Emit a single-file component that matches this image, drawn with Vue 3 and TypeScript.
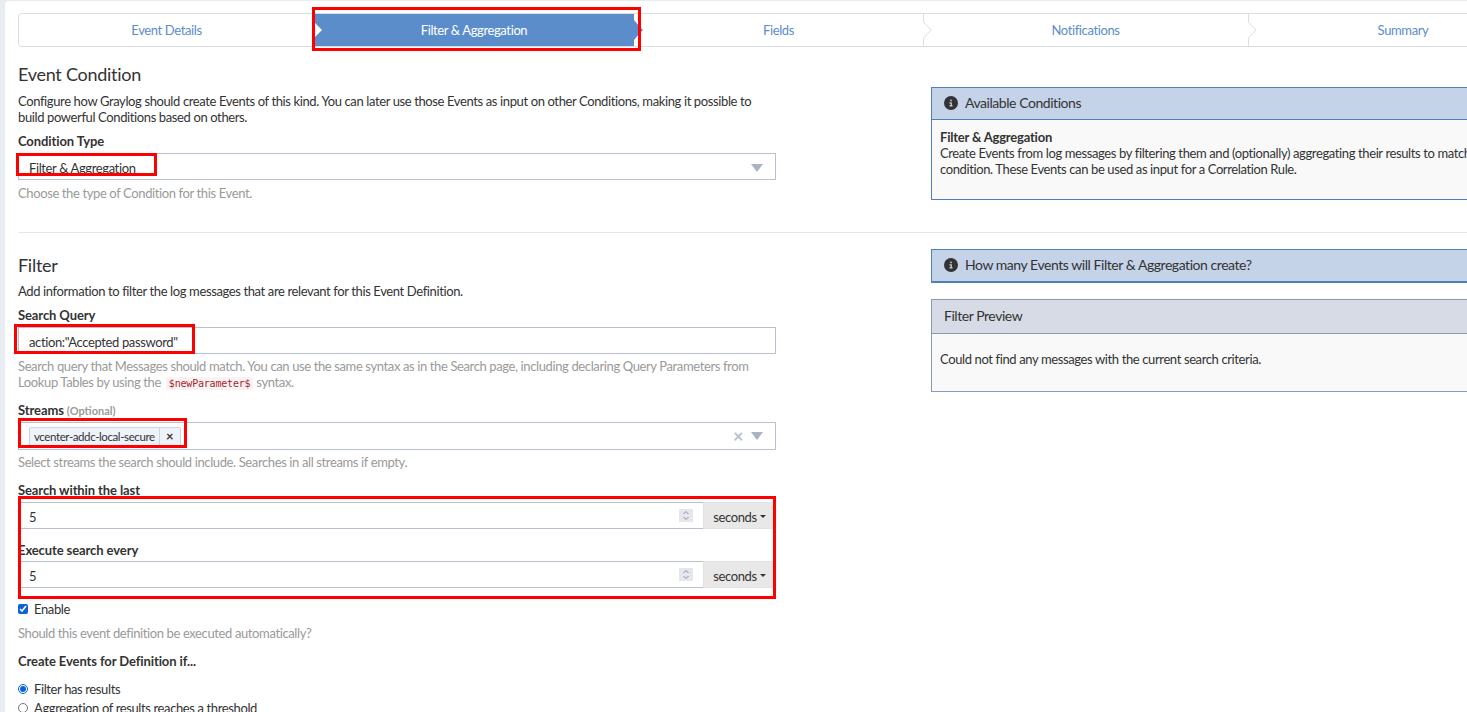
<script setup lang="ts">
interface WizardStep {
  title: string
  active?: boolean
}

const steps: WizardStep[] = [
  { title: 'Event Details' },
  { title: 'Filter & Aggregation', active: true },
  { title: 'Fields' },
  { title: 'Notifications' },
  { title: 'Summary' },
]

const infoPath =
  'M256 512A256 256 0 1 0 256 0a256 256 0 1 0 0 512zM216 336h24V272H216c-13.3 0-24-10.7-24-24s10.7-24 24-24h48c13.3 0 24 10.7 24 24v88h8c13.3 0 24 10.7 24 24s-10.7 24-24 24H216c-13.3 0-24-10.7-24-24s10.7-24 24-24zm40-208a32 32 0 1 1 0 64 32 32 0 1 1 0-64z'
</script>

<template>
  <div class="page">
    <div class="card">
      <nav class="steps">
        <div v-for="step in steps" :key="step.title" class="step" :class="{ active: step.active }">
          <svg class="chevron" viewBox="0 0 9 34" aria-hidden="true">
            <path v-if="step.active" d="M0 8 L8 16 L0 24 Z" fill="#fff" />
            <path v-else d="M0.5 0 V9 L8 17 L0.5 25 V34" fill="#fff" stroke="#d9dde6" />
          </svg>
          <svg v-if="step.active" class="tip" viewBox="0 0 9 32" aria-hidden="true">
            <path d="M0 6 L5 12 L9 16 L5 20 L0 26 Z" fill="#5b8dcb" />
          </svg>
          {{ step.title }}
        </div>
      </nav>

      <section class="row first">
        <div class="left">
          <h2>Event Condition</h2>
          <p class="text">
            Configure how Graylog should create Events of this kind. You can later use those Events as input on other Conditions, making it possible to build powerful Conditions based on others.
          </p>
          <label class="label">Condition Type</label>
          <div class="select">
            <span>Filter &amp; Aggregation</span>
            <span class="caret-big"></span>
          </div>
          <p class="help">Choose the type of Condition for this Event.</p>
        </div>
        <aside class="right">
          <div class="panel info">
            <header>
              <svg viewBox="0 0 512 512" aria-hidden="true"><path :d="infoPath" fill="#333" /></svg>
              Available Conditions
            </header>
            <div class="panel-body tall">
              <strong>Filter &amp; Aggregation</strong><br />
              Create Events from log messages by filtering them and (optionally) aggregating their results to match a given condition. These Events can be used as input for a Correlation Rule.
            </div>
          </div>
        </aside>
      </section>

      <hr />

      <section class="row second-row">
        <div class="left">
          <h2 class="filter-title">Filter</h2>
          <p class="text">Add information to filter the log messages that are relevant for this Event Definition.</p>

          <label class="label query-label">Search Query</label>
          <div class="input">action:"Accepted password"</div>
          <p class="help query-help">
            Search query that Messages should match. You can use the same syntax as in the Search page, including declaring Query Parameters from Lookup Tables by using the
            <code>$newParameter$</code> syntax.
          </p>

          <label class="label streams-label">Streams <small>(Optional)</small></label>
          <div class="select streams">
            <span class="tag">
              <span class="tag-name">vcenter-addc-local-secure</span>
              <span class="tag-close">×</span>
            </span>
            <span class="clear">×</span>
            <span class="caret-big"></span>
          </div>
          <p class="help streams-help">Select streams the search should include. Searches in all streams if empty.</p>

          <label class="label within-label">Search within the last</label>
          <div class="number-group">
            <div class="number">
              5
              <svg class="spin" viewBox="0 0 14 13" aria-hidden="true">
                <rect width="14" height="13" fill="#e6e7ee" />
                <path d="M4.5 5 L7 2.5 L9.5 5 M4.5 8 L7 10.5 L9.5 8" fill="none" stroke="#8a8d96" />
              </svg>
            </div>
            <div class="addon">seconds<span class="caret"></span></div>
          </div>

          <label class="label second">Execute search every</label>
          <div class="number-group">
            <div class="number">
              5
              <svg class="spin" viewBox="0 0 14 13" aria-hidden="true">
                <rect width="14" height="13" fill="#e6e7ee" />
                <path d="M4.5 5 L7 2.5 L9.5 5 M4.5 8 L7 10.5 L9.5 8" fill="none" stroke="#8a8d96" />
              </svg>
            </div>
            <div class="addon">seconds<span class="caret"></span></div>
          </div>

          <label class="check enable"><input type="checkbox" checked /> Enable</label>
          <p class="help enable-help">Should this event definition be executed automatically?</p>

          <label class="label create">Create Events for Definition if...</label>
          <label class="check radio-one"><input type="radio" name="when" checked /> Filter has results</label>
          <label class="check radio-two"><input type="radio" name="when" /> Aggregation of results reaches a threshold</label>
        </div>
        <aside class="right">
          <div class="panel info collapsed">
            <header>
              <svg viewBox="0 0 512 512" aria-hidden="true"><path :d="infoPath" fill="#333" /></svg>
              How many Events will Filter &amp; Aggregation create?
            </header>
          </div>
          <div class="panel preview">
            <header>Filter Preview</header>
            <div class="panel-body">Could not find any messages with the current search criteria.</div>
          </div>
        </aside>
      </section>

      <div class="mark m1"></div>
      <div class="mark m2"></div>
      <div class="mark m3"></div>
      <div class="mark m4"></div>
      <div class="mark m5"></div>
    </div>
  </div>
</template>

<style>
html,
body {
  margin: 0;
  height: 100%;
  overflow: hidden;
  background: #e9ebf2;
}
</style>

<style scoped>
.page {
  height: 712px;
  width: 1467px;
  overflow: hidden;
  padding: 1px 0 0 5px;
  box-sizing: border-box;
  font-family: Lato, "Liberation Sans", sans-serif;
  font-size: 13px;
  line-height: 16px;
  letter-spacing: -0.38px;
  color: #333;
}

.card {
  position: relative;
  width: 1700px;
  height: 800px;
  box-sizing: border-box;
  padding: 12px 0 0 13px;
  background: #fff;
  border-radius: 4px 0 0 0;
}

.steps {
  display: grid;
  grid-template-columns: 295px 320px 289px 325px 310px;
  height: 34px;
  box-sizing: border-box;
  border: 1px solid #d9dde6;
  border-radius: 4px;
  width: 1540px;
}

.step {
  position: relative;
  display: flex;
  align-items: center;
  justify-content: center;
  color: #5b8dcb;
  margin: -1px 0;
}

.step.active {
  margin: 0;
  background: #5b8dcb;
  color: #fff;
}

.chevron {
  position: absolute;
  left: 0;
  top: 0;
  width: 9px;
  height: 34px;
}

.step:first-child .chevron {
  display: none;
}

.step.active + .step .chevron {
  display: none;
}

.tip {
  position: absolute;
  left: 100%;
  top: 0;
  width: 9px;
  height: 32px;
  z-index: 1;
}

.row {
  display: flex;
  gap: 155px;
}

.first {
  margin-top: 17px;
}

.second-row {
  margin-top: 16px;
}

.left {
  width: 758px;
  flex: none;
}

.right {
  width: 600px;
  flex: none;
}

.first .right {
  padding-top: 23px;
}

h2 {
  margin: 0 0 9px;
  font-size: 18px;
  font-weight: 400;
  line-height: 20px;
  letter-spacing: -0.27px;
}

.filter-title {
  margin: 6px 0 8px;
}

.text {
  margin: 0;
}

.label {
  display: block;
  font-weight: 700;
  margin-top: 8px;
  margin-bottom: 4px;
  letter-spacing: -0.1px;
}

.label small {
  font-size: 11px;
  line-height: 0;
  letter-spacing: 0;
  color: #9a9a9a;
}

.select,
.input {
  display: flex;
  align-items: center;
  box-sizing: border-box;
  height: 27px;
  padding: 2px 10px 0;
  border: 1px solid #b7c0cf;
  background: #fff;
}

.select {
  justify-content: space-between;
}

.caret-big {
  width: 0;
  height: 0;
  margin-right: 2px;
  border-left: 6.5px solid transparent;
  border-right: 6.5px solid transparent;
  border-top: 8px solid #a9b3c4;
}

.help {
  margin: 5px 0 0;
  color: #9a9a9a;
}

code {
  margin-left: 2px;
  padding: 1px 3px;
  font-family: "DejaVu Sans Mono", monospace;
  font-size: 10px;
  letter-spacing: -0.2px;
  color: #a3272f;
  background: #fbf2f3;
  border-radius: 2px;
}

hr {
  margin: 31px 0 0;
  border: 0;
  border-top: 1px solid #e5e7ec;
}

.query-label {
  margin-top: 8px;
}

.query-help {
  margin-top: 4px;
}

.streams-label {
  margin-top: 10px;
}

.streams {
  height: 28px;
  padding-top: 0;
  justify-content: flex-start;
}

.tag {
  display: flex;
  height: 19px;
  box-sizing: border-box;
  border: 1px solid #c9d5e8;
  border-radius: 2px;
  background: #eef2f9;
  font-size: 11.5px;
  line-height: 17px;
}

.tag-name {
  padding: 0 4px;
  letter-spacing: -0.4px;
}

.tag-close {
  width: 20px;
  text-align: center;
  border-left: 1px solid #c9d5e8;
  font-size: 13px;
  font-weight: 700;
}

.clear {
  margin-left: auto;
  margin-right: 8px;
  font-size: 18px;
  font-weight: 700;
  color: #b7c0cf;
}

.streams-help {
  margin-top: 4px;
}

.within-label {
  margin-top: 12px;
}

.number-group {
  display: flex;
  height: 27px;
}

.number {
  display: flex;
  align-items: center;
  justify-content: space-between;
  flex: 1;
  box-sizing: border-box;
  padding: 2px 10px 0;
  border: 1px solid #b7c0cf;
  border-right: 0;
}

.spin {
  width: 14px;
  height: 13px;
  margin-top: -2px;
}

.addon {
  display: flex;
  align-items: center;
  justify-content: center;
  gap: 3px;
  width: 73px;
  padding-top: 2px;
  background: #e8e8e8;
  border: 1px solid #e2e2e2;
  box-sizing: border-box;
}

.caret {
  width: 0;
  height: 0;
  border-left: 3px solid transparent;
  border-right: 3px solid transparent;
  border-top: 3px solid #333;
}

.second {
  margin-top: 13px;
  margin-bottom: 3px;
}

.check {
  display: flex;
  align-items: center;
  gap: 6px;
}

.check input {
  width: 10px;
  height: 10px;
  margin: 0;
  accent-color: #0b62d6;
}

.enable {
  margin-top: 13px;
}

.enable-help {
  margin-top: 8px;
}

.create {
  margin-top: 12px;
}

.radio-one {
  margin-top: 12px;
}

.radio-two {
  margin-top: 3px;
}

.panel {
  border: 1px solid #4f7fb8;
  background: #f9f9f9;
}

.panel header {
  display: flex;
  align-items: center;
  gap: 7px;
  height: 31px;
  padding: 0 12px;
  font-size: 14px;
  letter-spacing: -0.45px;
  background: #c5d3e9;
  border-bottom: 1px solid #4f7fb8;
}

.info header {
  height: 30px;
  padding-bottom: 1px;
}

.panel header svg {
  width: 14px;
  height: 14px;
}

.panel-body {
  padding: 17px 8px;
}

.panel-body strong {
  letter-spacing: -0.2px;
}

.tall {
  height: 79px;
  box-sizing: border-box;
  padding-top: 9px;
}

.collapsed header {
  border-bottom-width: 2px;
}

.collapsed {
  border-bottom: 0;
  margin-bottom: 16px;
}

.preview {
  border-color: #8a9ab5;
}

.preview header {
  height: 31px;
  padding-bottom: 2px;
  background: #d6dbe5;
  border-bottom-color: #8a9ab5;
}

.preview .panel-body {
  height: 57px;
  box-sizing: border-box;
}

.mark {
  position: absolute;
  box-sizing: border-box;
  border: 3px solid #f00;
  pointer-events: none;
  z-index: 2;
}

.m1 { left: 307px; top: 6px; width: 329px; height: 44px; }
.m2 { left: 11px; top: 152px; width: 141px; height: 23px; }
.m3 { left: 9px; top: 323px; width: 181px; height: 30px; }
.m4 { left: 13px; top: 417px; width: 169px; height: 30px; }
.m5 { left: 13px; top: 495px; width: 758px; height: 103px; }
</style>
